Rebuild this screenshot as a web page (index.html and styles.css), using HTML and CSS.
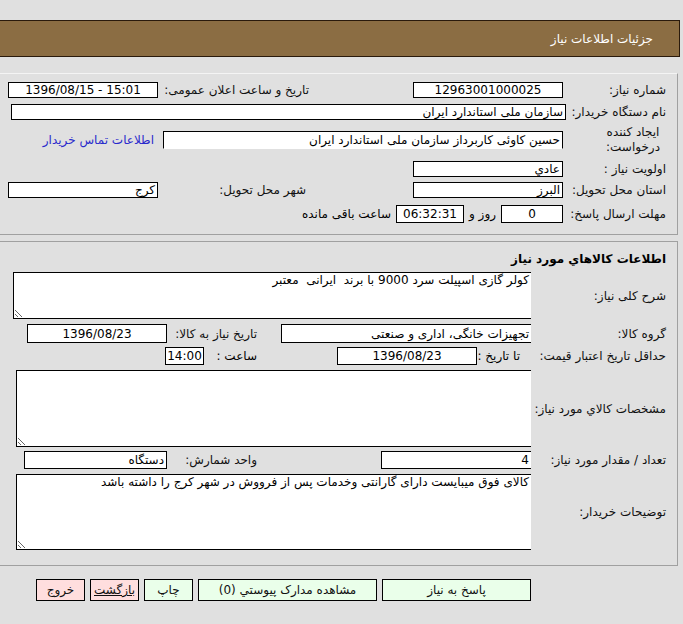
FILE: index.html
```html
<!DOCTYPE html>
<html lang="fa" dir="rtl">
<head>
<meta charset="utf-8">
<title>جزئیات اطلاعات نیاز</title>
<link rel="stylesheet" href="styles.css">
</head>
<body>
<div class="header">جزئیات اطلاعات نیاز</div>

<div class="panel p1">
  <div class="row r1">
    <div class="lbl c1">شماره نیاز:</div>
    <div class="fld c2"><span class="box w150 center">12963001000025</span></div>
    <div class="lbl c3">تاریخ و ساعت اعلان عمومی:</div>
    <div class="fld c4"><span class="box w150 center ltr">1396/08/15 - 15:01</span></div>
  </div>
  <div class="row r2">
    <div class="lbl c1">نام دستگاه خریدار:</div>
    <div class="fld"><span class="box w555">سازمان ملی استاندارد ایران</span></div>
  </div>
  <div class="row r3">
    <div class="lbl c1 two">ایجاد کننده<br>درخواست:</div>
    <div class="fld c23"><span class="box w400 nobottom">حسین کاوئی کاربرداز سازمان ملی استاندارد ایران</span></div>
    <div class="fld c4 linkcell"><a class="link" href="#">اطلاعات تماس خریدار</a></div>
  </div>
  <div class="row r4">
    <div class="lbl c1">اولویت نیاز :</div>
    <div class="fld c2"><span class="box w150">عادي</span></div>
  </div>
  <div class="row r5">
    <div class="lbl c1">استان محل تحویل:</div>
    <div class="fld c2"><span class="box w150">البرز</span></div>
    <div class="lbl c3 city">شهر محل تحویل:</div>
    <div class="fld c4"><span class="box w150">کرج</span></div>
  </div>
  <div class="row r6">
    <div class="lbl c1">مهلت ارسال پاسخ:</div>
    <div class="fld deadline">
      <span class="box w62 center">0</span>
      <span class="txt days">روز و</span>
      <span class="box w68 center">06:32:31</span>
      <span class="txt hours">ساعت باقی مانده</span>
    </div>
  </div>
</div>

<div class="panel p2">
  <div class="title">اطلاعات کالاهاي مورد نیاز</div>
  <div class="row t1">
    <div class="lbl k1">شرح کلی نیاز:</div>
    <div class="fld"><textarea class="ta ta1" readonly>کولر گازی اسپیلت سرد 9000 با برند  ایرانی  معتبر</textarea></div>
  </div>
  <div class="row g1">
    <div class="lbl k1">گروه کالا:</div>
    <div class="fld k2"><span class="box w250 noright">تجهیزات خانگی، اداری و صنعتی</span></div>
    <div class="lbl k3">تاریخ نیاز به کالا:</div>
    <div class="fld k4"><span class="box w140 center">1396/08/23</span></div>
  </div>
  <div class="row d1">
    <div class="lbl k1">حداقل تاریخ اعتبار قیمت:</div>
    <div class="fld k2 k2d">
      <span class="txt until">تا تاریخ :</span>
      <span class="box w140 center">1396/08/23</span>
    </div>
    <div class="fld k3 k3d">
      <span class="txt">ساعت :</span>
      <span class="box w39 center pushleft">14:00</span>
    </div>
  </div>
  <div class="row t2">
    <div class="lbl k1">مشخصات کالاي مورد نیاز:</div>
    <div class="fld"><textarea class="ta ta2" readonly></textarea></div>
  </div>
  <div class="row c5">
    <div class="lbl k1">تعداد / مقدار مورد نیاز:</div>
    <div class="fld k2"><span class="box w150 noright">4</span></div>
    <div class="lbl k3">واحد شمارش:</div>
    <div class="fld k4"><span class="box w143">دستگاه</span></div>
  </div>
  <div class="row t3">
    <div class="lbl k1">توضیحات خریدار:</div>
    <div class="fld"><textarea class="ta ta3" readonly>کالای فوق میبایست دارای گارانتی وخدمات پس از فرووش در شهر کرج را داشته باشد</textarea></div>
  </div>
</div>

<div class="buttons">
  <button class="btn green b1">پاسخ به نیاز</button>
  <button class="btn green b2">مشاهده مدارک پیوستي (0)</button>
  <button class="btn green b3">چاپ</button>
  <button class="btn pink b3 under">بازگشت</button>
  <button class="btn pink b3">خروج</button>
</div>
</body>
</html>
```

FILE: styles.css
```css
* { box-sizing: border-box; }
html, body { margin: 0; padding: 0; }
body {
  background: #e0e0e0;
  direction: rtl;
  font-family: Tahoma, "DejaVu Sans", sans-serif;
  font-size: 12px;
  color: #000;
  width: 683px;
  height: 624px;
  overflow: hidden;
}

.header {
  margin: 20px 3px 0 0;
  height: 37px;
  background: #8b6d43;
  border: 1px solid #2a1a0c;
  border-left: 0;
  color: #fff;
  font-size: 12px;
  padding-right: 26px;
  display: flex;
  align-items: center;
}

.panel {
  margin-right: 5px;
  border: 1px solid #a0a0a0;
  border-left: 0;
}
.p1 { margin-top: 16px; height: 162px; border-top-color: #f4f4f4; }
.p2 { margin-top: 6px; height: 325px; }

.row { display: flex; align-items: center; }
.lbl { color: #111; white-space: nowrap; }
.fld { display: flex; align-items: center; }

/* panel 1 columns */
.c1 { width: 111px; padding-right: 11px; }
.c2 { width: 248px; padding-right: 3px; }
.c3 { width: 157px; padding-right: 9px; }
.c4 { width: 160px; padding-right: 3px; }
.c23 { width: 405px; padding-right: 3px; }
.city { padding-right: 12px; }
.linkcell { padding-right: 7px; }
.link { color: #2a2acc; text-decoration: none; }
.two { line-height: 15px; text-align: center; padding-right: 0; padding-left: 23px; }

.r1 { margin-top: 7px; height: 17px; }
.r2 { margin-top: 5px; height: 18px; }
.r3 { margin-top: 2px; height: 34px; }
.r4 { margin-top: 3px; height: 18px; }
.r5 { margin-top: 3px; height: 18px; }
.r6 { margin-top: 6px; height: 18px; }

.box {
  display: flex;
  align-items: center;
  height: 100%;
  background: #fff;
  border: 1px solid #000;
  padding: 0 2px;
  white-space: nowrap;
  overflow: hidden;
}
.ltr { direction: ltr; }
.r3 .box { height: 18px; }
.center { justify-content: center; }
.nobottom { border-bottom-color: #fff; }
.noright { border-right: 0; }
.w150 { width: 150px; }
.w555 { width: 555px; }
.w400 { width: 400px; }
.w62 { width: 62px; }
.w68 { width: 68px; }
.w250 { width: 250px; }
.w140 { width: 140px; }
.w143 { width: 143px; }
.w39 { width: 39px; }

.deadline { padding-right: 3px; height: 100%; }
.txt { white-space: nowrap; }
.days { margin: 0 5px 0 5px; }
.hours { margin-right: 5px; }

/* panel 2 */
.title {
  font-weight: bold;
  font-size: 12px;
  padding-right: 11px;
  margin-top: 8px;
  height: 18px;
  line-height: 18px;
}
.k1 { width: 143px; padding-right: 11px; }
.k2 { width: 275px; padding-right: 3px; height: 100%; }
.k3 { width: 90px; padding-right: 2px; }
.k4 { width: 168px; padding-right: 2px; height: 100%; }
.k2d { padding-right: 0; }
.until { width: 57px; padding-right: 14px; flex: none; }
.k3d { width: 94px; height: 100%; }
.pushleft { margin-right: auto; }

.ta {
  display: block;
  font-family: Tahoma, "DejaVu Sans", sans-serif;
  font-size: 12px;
  background: #fff;
  border: 1px solid #000;
  border-right: 0;
  padding: 0 2px;
  margin: 0;
  direction: rtl;
  color: #000;
  outline: none;
}
.ta1 { width: 518px; height: 47px; margin-right: 3px; }
.ta2 { width: 515px; height: 77px; margin-right: 3px; }
.ta3 { width: 515px; height: 76px; margin-right: 3px; }

.t1 { margin-top: 4px; }
.g1 { margin-top: 5px; height: 19px; }
.d1 { margin-top: 4px; height: 18px; }
.t2 { margin-top: 5px; }
.c5 { margin-top: 4px; height: 18px; }
.t3 { margin-top: 5px; }

.buttons {
  display: flex;
  gap: 5px;
  margin-top: 13px;
  padding-right: 152px;
}
.btn {
  font-family: Tahoma, "DejaVu Sans", sans-serif;
  font-size: 12px;
  height: 22px;
  border: 1px solid #000;
  padding: 0;
  margin: 0;
  color: #111;
}
.green { background: #eaffea; }
.pink { background: #ffdede; }
.b1 { width: 149px; }
.b2 { width: 179px; }
.b3 { width: 49px; }
.under { text-decoration: underline; }
```
